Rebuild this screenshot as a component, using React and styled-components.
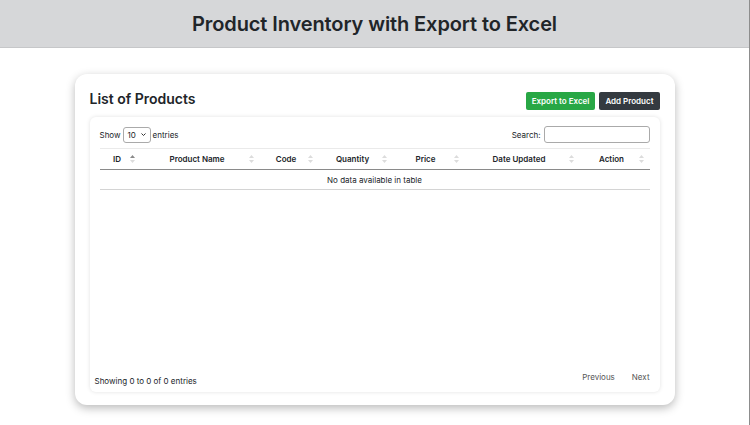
import React from 'react'
import styled, { createGlobalStyle } from 'styled-components'

const GlobalStyle = createGlobalStyle`
    html, body {
        margin: 0;
        padding: 0;
        background: #ffffff;
    }
    body {
        font-family: 'Inter', 'Liberation Sans', sans-serif;
        color: #212529;
    }
`;

const Page = styled.div`
    box-sizing: border-box;
    width: 750px;
    min-height: 425px;
    border-right: 1px solid #8d8d8d;
`;

const Header = styled.header`
    height: 48px;
    box-sizing: border-box;
    background: #d6d7d9;
    border-bottom: 1px solid #c6c7c9;
    display: flex;
    align-items: center;
    justify-content: center;
`;

const Title = styled.h1`
    margin: 0;
    font-size: 20px;
    font-weight: 600;
    color: #212529;
    letter-spacing: -0.1px;
`;

const Card = styled.div`
    box-sizing: border-box;
    width: 600px;
    height: 331px;
    margin: 26px auto 0;
    padding: 15px 15px 13px;
    background: #fff;
    border-radius: 12px;
    box-shadow: 0 3px 10px rgba(0, 0, 0, 0.28);
    display: flex;
    flex-direction: column;
`;

const CardHead = styled.div`
    display: flex;
    align-items: center;
    justify-content: space-between;
    height: 24px;
    margin-bottom: 4px;
`;

const CardTitle = styled.h2`
    margin: 0;
    font-size: 14px;
    font-weight: 600;
    color: #212529;
    position: relative;
    top: -3px;
`;

const Actions = styled.div`
    display: flex;
    gap: 4px;
`;

const Button = styled.button`
    height: 18px;
    padding: 0 6px;
    border: none;
    border-radius: 2px;
    font-family: inherit;
    font-size: 8px;
    font-weight: 600;
    color: #ffffff;
    background: ${p => (p.$variant === 'success' ? '#28a745' : '#343a40')};
`;

const Box = styled.div`
    flex: 1;
    border-radius: 6px;
    box-shadow: 0 0 4px rgba(0, 0, 0, 0.12);
    padding: 9px 10px 6px;
    display: flex;
    flex-direction: column;
`;

const Controls = styled.div`
    display: flex;
    align-items: center;
    justify-content: space-between;
    font-size: 8px;
    height: 17px;
    margin-bottom: 5px;
`;

const Label = styled.label`
    display: flex;
    align-items: center;
    gap: 2px;
`;

const Select = styled.div`
    box-sizing: border-box;
    width: 28px;
    height: 16px;
    border: 1px solid #aaa;
    border-radius: 3px;
    display: flex;
    align-items: center;
    justify-content: space-between;
    padding: 0 4px 0 4px;
    font-size: 8px;
`;

const Input = styled.div`
    box-sizing: border-box;
    width: 106px;
    height: 17px;
    border: 1px solid #aaa;
    border-radius: 3px;
    margin-left: 1px;
`;

const Table = styled.table`
    width: 550px;
    border-collapse: collapse;
    table-layout: fixed;
    font-size: 8px;
    line-height: 10px;
`;

const Th = styled.th`
    position: relative;
    height: 20px;
    padding: 0 10px 0 4px;
    font-weight: 600;
    text-align: center;
    border-top: 1px solid #eaeaea;
    border-bottom: 1px solid #8a8a8a;
`;

const SortIcon = styled.svg`
    position: absolute;
    right: 6px;
    top: 6px;
`;

const Td = styled.td`
    height: 19px;
    padding: 0;
    text-align: center;
    border-bottom: 1px solid #d4d4d4;
`;

const Footer = styled.div`
    margin-top: auto;
    margin-left: -5px;
    display: flex;
    justify-content: space-between;
    align-items: flex-start;
    font-size: 8px;
`;

const Info = styled.div`
    padding-top: 4px;
`;

const Pager = styled.div`
    display: flex;
    gap: 17px;
    color: #555555;
`;

const columns = [
    { name: 'ID', width: 41, sorted: true },
    { name: 'Product Name', width: 119 },
    { name: 'Code', width: 59 },
    { name: 'Quantity', width: 74 },
    { name: 'Price', width: 72 },
    { name: 'Date Updated', width: 115 },
    { name: 'Action', width: 70 },
];

const Sort = ({ active }) => (
    <SortIcon width="5" height="8" viewBox="0 0 5 8">
        <path d="M2.5 0 L5 3 L0 3 Z" fill={active ? '#8a8a8a' : '#dcdcdc'} />
        <path d="M2.5 8 L5 5 L0 5 Z" fill="#dcdcdc" />
    </SortIcon>
);

const App = () => {
    return (
        <Page>
            <GlobalStyle />
            <Header>
                <Title>Product Inventory with Export to Excel</Title>
            </Header>
            <Card>
                <CardHead>
                    <CardTitle>List of Products</CardTitle>
                    <Actions>
                        <Button $variant="success">Export to Excel</Button>
                        <Button>Add Product</Button>
                    </Actions>
                </CardHead>
                <Box>
                    <Controls>
                        <Label>
                            Show
                            <Select>
                                10
                                <svg width="5" height="3" viewBox="0 0 5 3">
                                    <path d="M0.5 0.5 L2.5 2.5 L4.5 0.5" stroke="#333" strokeWidth="1" fill="none" />
                                </svg>
                            </Select>
                            entries
                        </Label>
                        <Label>
                            Search:
                            <Input />
                        </Label>
                    </Controls>
                    <Table>
                        <colgroup>
                            {columns.map(c => <col key={c.name} style={{ width: c.width }} />)}
                        </colgroup>
                        <thead>
                            <tr>
                                {columns.map(c => (
                                    <Th key={c.name}>
                                        {c.name}
                                        <Sort active={c.sorted} />
                                    </Th>
                                ))}
                            </tr>
                        </thead>
                        <tbody>
                            <tr>
                                <Td colSpan={7}>No data available in table</Td>
                            </tr>
                        </tbody>
                    </Table>
                    <Footer>
                        <Info>Showing 0 to 0 of 0 entries</Info>
                        <Pager>
                            <span>Previous</span>
                            <span>Next</span>
                        </Pager>
                    </Footer>
                </Box>
            </Card>
        </Page>
    )
}

export default App
